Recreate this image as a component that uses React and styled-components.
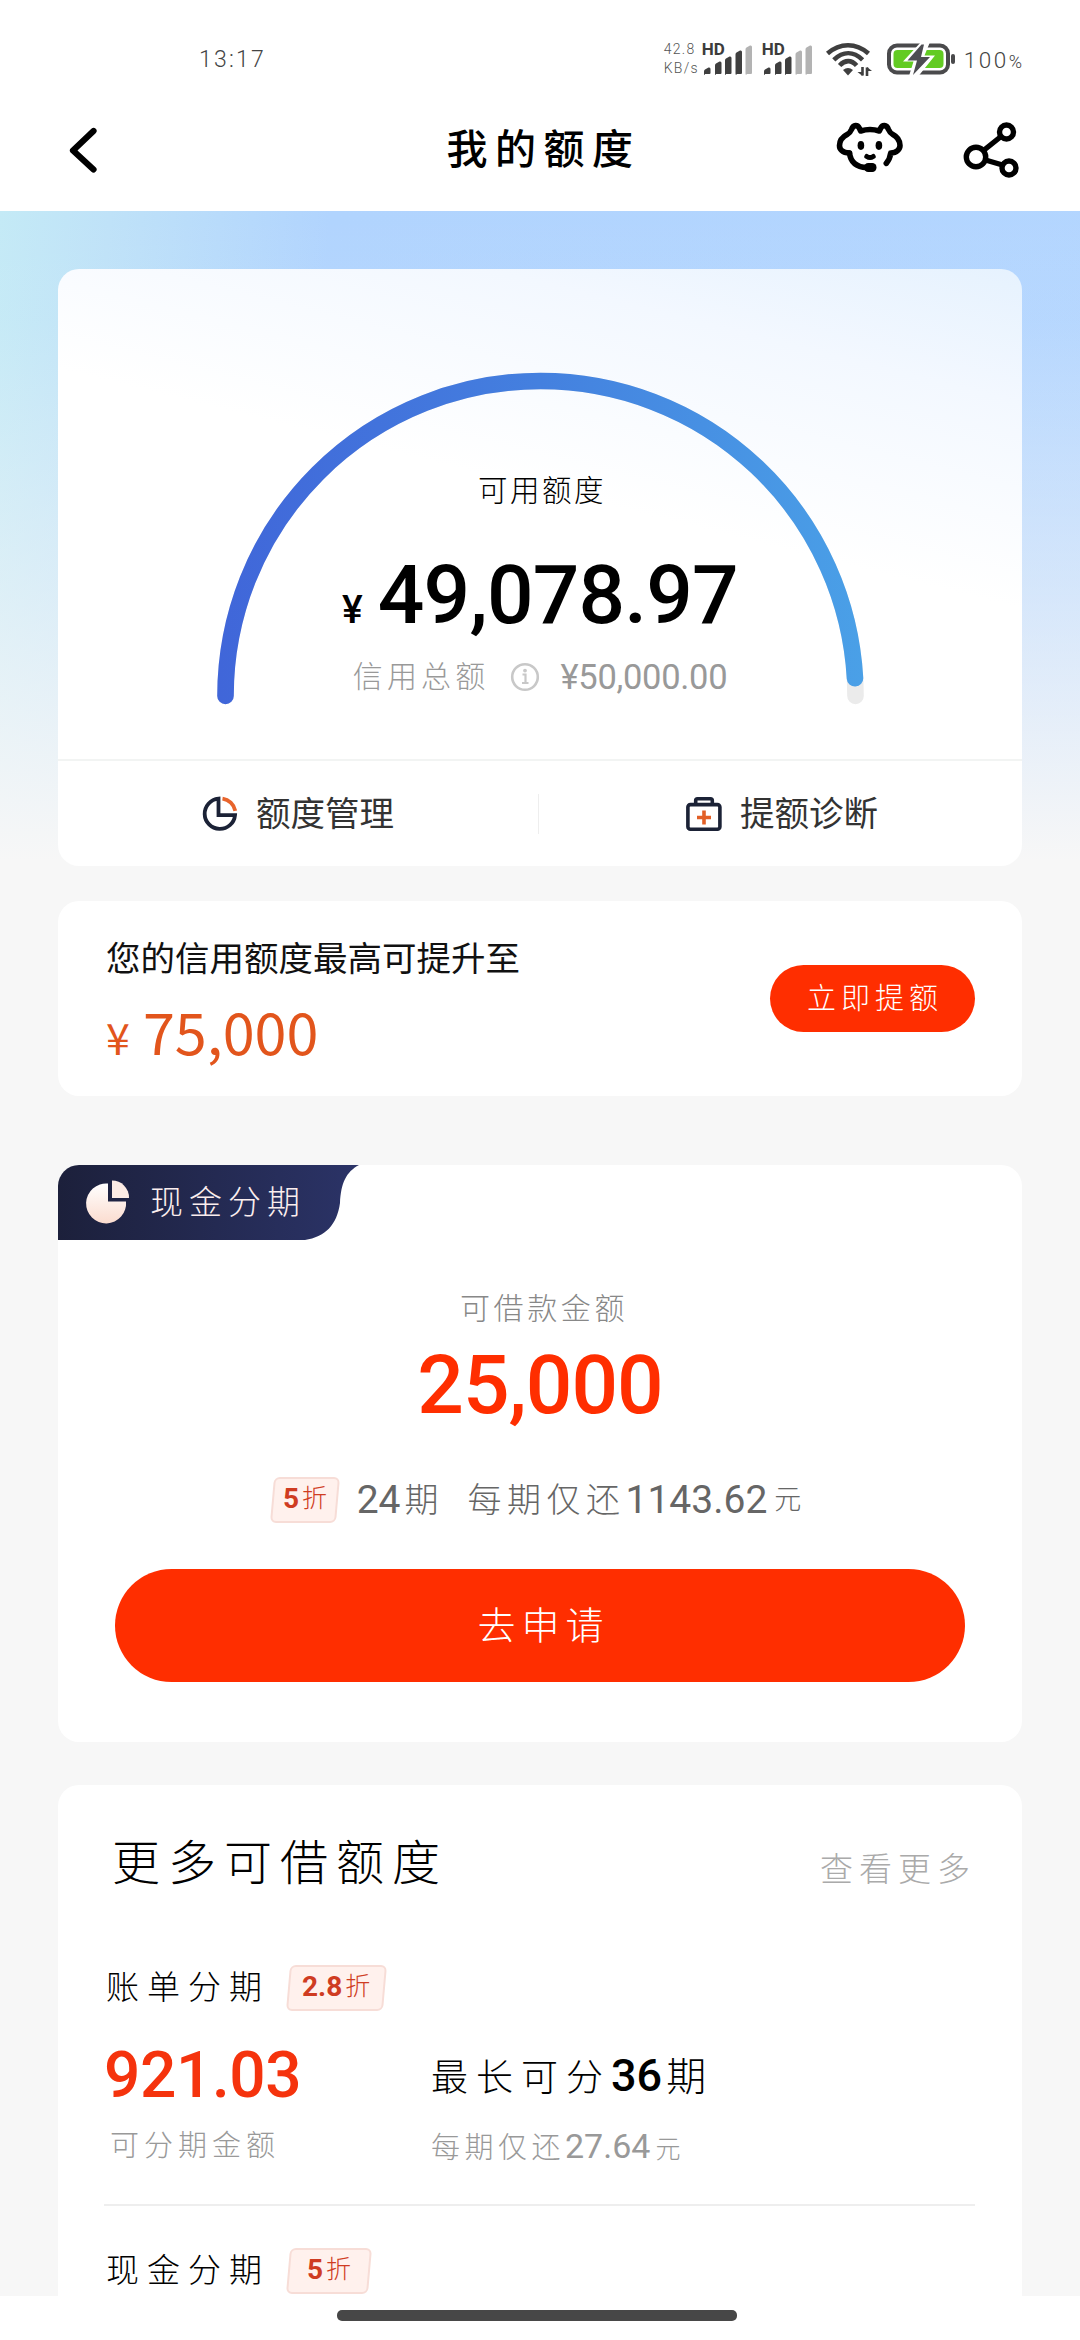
import React from "react";
import styled, { createGlobalStyle } from "styled-components";

const RED = "#ff2e00";

const GlobalStyle = createGlobalStyle`
  * { box-sizing: border-box; }
  body {
    margin: 0;
    background: #fff;
    font-family: Roboto, "Noto Sans CJK SC", sans-serif;
  }
  svg { display: block; flex: none; }
`;

const Screen = styled.div`
  width: 1080px;
  height: 2340px;
  overflow: hidden;
  display: flex;
  flex-direction: column;
  background: #fff;
`;

const Text = styled.span`
  display: block;
  white-space: nowrap;
  font-size: ${(p) => p.$size}px;
  font-weight: ${(p) => p.$weight || 300};
  line-height: ${(p) => p.$line || 40}px;
  letter-spacing: ${(p) => p.$track || 0}px;
  margin: ${(p) => p.$margin || "0"};
  color: ${(p) => p.$color || "#000"};
`;

/* ---------- status bar ---------- */

const StatusBar = styled.header`
  height: 80px;
  flex: none;
  padding: 40px 58px 0 199px;
  display: flex;
  align-items: flex-start;
  justify-content: space-between;
`;

const StatusGroup = styled.div`
  display: flex;
  align-items: flex-start;
`;

const Speed = styled.div`
  width: 38px;
  font-size: 14px;
  font-weight: 300;
  line-height: 19px;
  letter-spacing: 1.3px;
  color: #555;
  white-space: nowrap;
`;

const HdSignal = styled.div`
  width: 60px;
  display: grid;
  & > * { grid-area: 1 / 1; }
`;

const HdLabel = styled.span`
  font-size: 17px;
  font-weight: 700;
  line-height: 18px;
  color: #3c3c3c;
`;

const WifiSlot = styled.div`
  margin: 0 13px 0 3px;
`;

const Percent = styled.span`
  font-size: 18px;
  letter-spacing: 0;
`;

const BARS = [
  [2, 27, 7],
  [13, 21, 13],
  [23, 16, 18],
  [33.5, 10, 24],
  [43.5, 5, 29],
];

function Signal({ level }) {
  return (
    <HdSignal>
      <HdLabel>HD</HdLabel>
      <svg width="52" height="36" viewBox="0 0 52 36">
        {BARS.map(([x, y, h], i) => (
          <path
            key={x}
            d={`M${x + 1} ${y + h}h4.5q1 0 1-1v-${h - 3}q0-2-2-1.5l-3.5 2q-1 .5-1 2v${h - 5}q0 1.5 1 1.5z`}
            fill={i < level ? "#3f3f3f" : "#b3b3b3"}
          />
        ))}
      </svg>
    </HdSignal>
  );
}

function Wifi() {
  return (
    <svg width="48" height="36" viewBox="0 0 48 36" fill="none" stroke="#3f3f3f" strokeWidth="4.6">
      <path d="M2.5 13.5C15 2.5 31 2.5 43.500 13.500" />
      <path d="M8.800 19.800C18 11 28.500 11 37.600 19.800" />
      <path d="M14.600 25.500C20 19.700 26.500 19.700 31.600 25.500" />
      <path d="M18 30q5-4 10 0l-5 5.500z" fill="#3f3f3f" stroke="none" />
      <path d="M37.500 27v8.500M42 36v-8.500" strokeWidth="2.600" />
      <path d="M32.500 32l5 4v-4zM47 31l-5-4v4z" fill="#3f3f3f" stroke="none" />
    </svg>
  );
}

function Battery() {
  return (
    <svg width="72" height="38" viewBox="0 0 72 38">
      <rect x="3" y="5.500" width="59" height="27" rx="8" fill="#fff" stroke="#4a4a4c" strokeWidth="4" />
      <rect x="7.500" y="10" width="50" height="18" rx="4" fill="#62cb22" />
      <path d="M35 2L17 21.500h10.500L23 36h9.500L49 15.500H38.500L44 2z" fill="#fff" />
      <path d="M35.500 4.500L21.500 20.500h9.500l-4 14.500L44 17h-9l3-12.500z" fill="#4d4d52" />
      <rect x="65" y="14" width="4" height="10" rx="2" fill="#4a4a4c" />
    </svg>
  );
}

/* ---------- title bar ---------- */

const TitleBar = styled.nav`
  height: 131px;
  flex: none;
  padding: 9px 61px 0 68px;
  display: grid;
  grid-template-columns: 1fr auto 1fr;
  align-items: center;
`;

const TitleActions = styled.div`
  display: flex;
  justify-content: flex-end;
  gap: 59px;
`;

function BackIcon() {
  return (
    <svg width="30" height="48" viewBox="0 0 30 48" fill="none" stroke="#000" strokeWidth="6.200" strokeLinecap="round" strokeLinejoin="round">
      <path d="M25.500 5L5 24.500l20.500 19" />
    </svg>
  );
}

function ServiceIcon() {
  return (
    <svg width="68" height="54" viewBox="0 0 68 54" fill="none" stroke="#000" strokeWidth="5.600" strokeLinecap="round" strokeLinejoin="round">
      <path d="M13.500 32C6 32 3.500 28 3.500 24.500C3.500 19 6 16 11.500 13.200Q14 12 15.500 8.500C17.500 3.500 21.500 3.500 23.500 7.500L24.700 10Q34 7 43.300 10L44.500 7.500C46.500 3.500 50.500 3.500 52.500 8.500Q54 12 56.500 13.200C62 16 64 19 64 24.500C64 28 61 32 54.700 32Q54 38 50.300 42.300" />
      <path d="M13.500 32C14.500 41 20 46 31 46.700" />
      <rect x="28" y="42" width="12.500" height="9" rx="4.200" fill="#000" stroke="none" />
      <ellipse cx="24.900" cy="24.500" rx="3.300" ry="4.400" fill="#000" stroke="none" />
      <ellipse cx="42.900" cy="24.500" rx="3.300" ry="4.400" fill="#000" stroke="none" />
      <path d="M30.800 35.500Q34 37.600 37.200 35.500" strokeWidth="5" />
    </svg>
  );
}

function ShareIcon() {
  return (
    <svg width="56" height="58" viewBox="0 0 56 58" fill="none" stroke="#000" strokeWidth="5.400">
      <circle cx="13" cy="36" r="9.700" />
      <circle cx="43.500" cy="11" r="7" />
      <circle cx="46" cy="47" r="7" />
      <path d="M20.500 29.500L38 15.500M22.500 39l17 5" />
    </svg>
  );
}

/* ---------- page body ---------- */

const Body = styled.main`
  height: 2085px;
  flex: none;
  overflow: hidden;
  padding: 58px 58px 0;
  background:
    linear-gradient(180deg, rgba(247, 247, 247, 0) 0, rgba(247, 247, 247, 0.05) 110px, rgba(247, 247, 247, 0.5) 380px, #f7f7f7 650px),
    linear-gradient(95deg, #c4eaf6 0, #bfe2f8 110px, #b1d4fe 330px, #b4d6ff 100%) #f7f7f7;
`;

const Card = styled.section`
  height: ${(p) => p.$height}px;
  margin-bottom: ${(p) => p.$gap || 0}px;
  border-radius: 21px;
  background: #fff;
  overflow: hidden;
`;

const QuotaCard = styled(Card)`
  background: linear-gradient(194deg, #e6f2fe 0, #f3f8ff 130px, #fff 330px);
`;

const Gauge = styled.div`
  height: 490px;
  display: grid;
  & > * { grid-area: 1 / 1; }
`;

const GaugeInfo = styled.div`
  display: flex;
  flex-direction: column;
  align-items: center;
  padding-top: 202px;
`;

const AmountLine = styled.div`
  height: 90px;
  display: flex;
  align-items: baseline;
  gap: 15px;
  margin-top: 39px;
`;

const TotalLine = styled.div`
  display: flex;
  align-items: center;
  gap: 12px;
  margin-top: 17px;
`;

const Actions = styled.div`
  height: 107px;
  border-top: 2px solid #f2f4f3;
  display: flex;
  align-items: center;
`;

const Action = styled.div`
  flex: 1;
  height: 40px;
  display: flex;
  align-items: center;
  justify-content: center;
  gap: 18px;
  padding-left: ${(p) => p.$shift || 0}px;
  & + & { border-left: 1px solid #eee; }
`;

const ARC = "M167.500 427A315 315 0 0 1 797.500 427";

function GaugeArc({ ratio }) {
  const length = Math.PI * 315;
  return (
    <svg width="964" height="490" viewBox="0 0 964 490" fill="none" strokeWidth="16.600" strokeLinecap="round">
      <defs>
        <linearGradient id="arc" x1="160" y1="0" x2="805" y2="0" gradientUnits="userSpaceOnUse">
          <stop offset="0" stopColor="#4066d9" />
          <stop offset="0.500" stopColor="#4480df" />
          <stop offset="1" stopColor="#4aa0e7" />
        </linearGradient>
      </defs>
      <path d={ARC} stroke="#ebebeb" />
      <path d={ARC} stroke="url(#arc)" strokeDasharray={`${length * ratio} ${length}`} />
    </svg>
  );
}

const InfoSlot = styled.div`
  margin: 0 9px 0 8px;
`;

function InfoIcon() {
  return (
    <InfoSlot>
      <svg width="30" height="30" viewBox="0 0 30 30" fill="none" stroke="#c8c8c8">
        <circle cx="15" cy="15" r="12.800" strokeWidth="2.600" />
        <path d="M12.500 12.500h3v8M12 21h6.500" strokeWidth="2.200" />
        <circle cx="15" cy="8.600" r="1.900" fill="#c8c8c8" stroke="none" />
      </svg>
    </InfoSlot>
  );
}

function QuotaIcon() {
  return (
    <svg width="36" height="36" viewBox="0 0 36 36" fill="none" strokeWidth="3.800">
      <path d="M16.500 2.600A15.200 15.200 0 1 0 33 19.200H16.500z" stroke="#1b2236" />
      <path d="M20.500 2.600A15.500 15.500 0 0 1 33.300 14.800" stroke="#e8642c" />
    </svg>
  );
}

function KitIcon() {
  return (
    <svg width="36" height="36" viewBox="0 0 36 36" fill="none" strokeWidth="3.600">
      <rect x="1.900" y="8.600" width="32" height="24.600" rx="2.500" stroke="#1b2236" />
      <path d="M9.700 8.500V4.500q0-1.800 1.800-1.800h13q1.800 0 1.800 1.800v4" stroke="#1b2236" />
      <path d="M18 14.500v14M11 21.500h14" stroke="#e25f26" />
    </svg>
  );
}

/* ---------- raise card ---------- */

const RaiseCard = styled(Card)`
  display: flex;
  align-items: center;
  justify-content: space-between;
  padding: 0 47px 0 48px;
`;

const RaiseCopy = styled.div`
  display: flex;
  flex-direction: column;
  gap: 24px;
  padding-bottom: 2px;
`;

const RaiseTitle = styled.div`
  font: 400 34.500px/40px "Noto Sans CJK SC", sans-serif;
  color: #111;
`;

const RaiseAmount = styled.div`
  font: 400 57.500px/60px "Noto Sans CJK SC", sans-serif;
  color: #e2551c;
  small { font-size: 43px; line-height: 1; margin-right: 13px; }
`;

const PillButton = styled.button`
  border: 0;
  padding: 0;
  display: flex;
  align-items: center;
  justify-content: center;
  width: ${(p) => p.$width}px;
  height: ${(p) => p.$height}px;
  margin: ${(p) => p.$margin || "0"};
  border-radius: 60px;
  background: ${RED};
  font-family: inherit;
`;

/* ---------- cash card ---------- */

const CashCard = styled(Card)`
  display: flex;
  flex-direction: column;
  align-items: center;
`;

const CashTab = styled.div`
  align-self: flex-start;
  width: 302px;
  height: 75px;
  display: grid;
  & > * { grid-area: 1 / 1; }
`;

const CashTabLabel = styled.div`
  display: flex;
  align-items: center;
  gap: 20px;
  padding-left: 27px;
`;

function PieIcon() {
  return (
    <svg width="45" height="45" viewBox="0 0 45 45">
      <defs>
        <linearGradient id="pie" x1="0" y1="0" x2="0" y2="1">
          <stop offset="0" stopColor="#fff" />
          <stop offset="1" stopColor="#fbdccf" />
        </linearGradient>
      </defs>
      <path d="M23 3.500A20 20 0 1 0 41 21.500H23z" fill="url(#pie)" />
      <path d="M27 .5A17 17 0 0 1 44 18H27z" fill="#fdece5" />
    </svg>
  );
}

const OfferRow = styled.div`
  height: 46px;
  margin-top: 51px;
  padding-right: 7px;
  display: flex;
  align-items: center;
`;

const Badge = styled.span`
  width: ${(p) => p.$width}px;
  height: 46px;
  flex: none;
  border: 2px solid #f7ddd7;
  border-radius: 6px;
  background: #fff1ed;
  transform: skewX(-5deg);
  display: flex;
  align-items: center;
  justify-content: center;
`;

const BadgeText = styled.span`
  transform: skewX(5deg);
  display: flex;
  align-items: center;
  gap: 3px;
  font-size: 28px;
  font-weight: 700;
  line-height: 40px;
  padding-bottom: 2px;
  color: #cf3c22;
  small { font-size: 25px; font-weight: 300; }
`;

function Discount({ value, width }) {
  return (
    <Badge $width={width}>
      <BadgeText>
        {value}
        <small>折</small>
      </BadgeText>
    </Badge>
  );
}

/* ---------- more quotas ---------- */

const MoreCard = styled(Card)`
  padding: 49px 47px 0 46px;
`;

const MoreHead = styled.div`
  height: 60px;
  margin-bottom: 71px;
  padding-left: 8px;
  display: flex;
  justify-content: space-between;
`;

const PlanHead = styled.div`
  height: 46px;
  padding-left: 2px;
  display: flex;
  align-items: center;
  gap: 18px;
`;

const PlanGrid = styled.div`
  display: grid;
  grid-template-columns: 327px 1fr;
  grid-template-rows: 60px 36px;
  row-gap: 22px;
  margin-top: 35px;
  padding-bottom: 40px;
  margin-bottom: 42px;
  border-bottom: 2px solid #eee;
`;

const Mixed = styled.div`
  display: flex;
  align-items: baseline;
`;

const HomeArea = styled.footer`
  height: 44px;
  display: flex;
  justify-content: center;
  padding: 14px 7px 0 0;
`;

const HomeBar = styled.div`
  width: 400px;
  height: 11px;
  border-radius: 5px;
  background: #474747;
`;

export default function App() {
  return (
    <Screen>
      <GlobalStyle />
      <StatusBar>
        <Text $size={23} $weight={300} $track={2.2} $color="#444">13:17</Text>
        <StatusGroup>
          <Speed>42.8<br />KB/s</Speed>
          <Signal level={4} />
          <Signal level={3} />
          <WifiSlot><Wifi /></WifiSlot>
          <Battery />
          <Text $size={22.5} $track={2.5} $color="#444" $margin="0 0 0 6px">
            100<Percent>%</Percent>
          </Text>
        </StatusGroup>
      </StatusBar>

      <TitleBar>
        <BackIcon />
        <Text $size={41} $weight={500} $track={7.5} $line={60}>我的额度</Text>
        <TitleActions>
          <ServiceIcon />
          <ShareIcon />
        </TitleActions>
      </TitleBar>

      <Body>
        <QuotaCard $height={597} $gap={35}>
          <Gauge>
            <GaugeArc ratio={0.9816} />
            <GaugeInfo>
              <Text $size={29.5} $track={2.5} $margin="0 0 0 4px">可用额度</Text>
              <AmountLine>
                <Text $size={39} $weight={500} $line={90}>¥</Text>
                <Text $size={82} $weight={500} $line={90} $track={-0.8}>49,078.97</Text>
              </AmountLine>
              <TotalLine>
                <Text $size={30} $track={4.2} $color="#999">信用总额</Text>
                <InfoIcon />
                <Text $size={34.5} $weight={400} $track={-0.3} $color="#999">¥50,000.00</Text>
              </TotalLine>
            </GaugeInfo>
          </Gauge>
          <Actions>
            <Action>
              <QuotaIcon />
              <Text $size={34.5} $weight={400} $color="#333">额度管理</Text>
            </Action>
            <Action $shift={3}>
              <KitIcon />
              <Text $size={34.5} $weight={400} $color="#333">提额诊断</Text>
            </Action>
          </Actions>
        </QuotaCard>

        <RaiseCard $height={195} $gap={69}>
          <RaiseCopy>
            <RaiseTitle>您的信用额度最高可提升至</RaiseTitle>
            <RaiseAmount><small>¥</small>75,000</RaiseAmount>
          </RaiseCopy>
          <PillButton $width={205} $height={67}>
            <Text $size={29} $track={5} $color="#fff" $margin="0 0 0 5px">立即提额</Text>
          </PillButton>
        </RaiseCard>

        <CashCard $height={577} $gap={43}>
          <CashTab>
            <svg width="302" height="75" viewBox="0 0 302 75">
              <defs>
                <linearGradient id="tab">
                  <stop offset="0" stopColor="#1c203b" />
                  <stop offset="1" stopColor="#2b3367" />
                </linearGradient>
              </defs>
              <path d="M0 0H301C288 7 283 18 282 38C279 60 267 72 247 75H0z" fill="url(#tab)" />
            </svg>
            <CashTabLabel>
              <PieIcon />
              <Text $size={33} $track={6} $color="#fbeeee">现金分期</Text>
            </CashTabLabel>
          </CashTab>
          <Text $size={30} $track={3.6} $color="#888" $margin="49px 0 0 8px">可借款金额</Text>
          <Text $size={82} $weight={500} $line={82} $track={-1} $color={RED} $margin="15px 0 0">25,000</Text>
          <OfferRow>
            <Discount value="5" width={66} />
            <Text $size={39} $weight={400} $color="#666" $margin="0 4px 0 19px">24</Text>
            <Text $size={34} $color="#666" $margin="0 29px 0 0">期</Text>
            <Text $size={34} $track={5.5} $color="#666">每期仅还</Text>
            <Text $size={39} $weight={400} $color="#666">1143.62</Text>
            <Text $size={27} $color="#666" $margin="0 0 0 7px">元</Text>
          </OfferRow>
          <PillButton $width={850} $height={113} $margin="46px 0 0">
            <Text $size={38} $track={6} $line={60} $color="#fff" $margin="0 0 0 7px">去申请</Text>
          </PillButton>
        </CashCard>

        <MoreCard $height={600}>
          <MoreHead>
            <Text $size={48} $track={8} $line={60}>更多可借额度</Text>
            <Text $size={33} $track={6} $line={72} $color="#aaa" $margin="0 -1px 0 0">查看更多</Text>
          </MoreHead>
          <PlanHead>
            <Text $size={33} $track={8}>账单分期</Text>
            <Discount value="2.8" width={97} />
          </PlanHead>
          <PlanGrid>
            <Text $size={64} $weight={500} $line={60} $track={-0.4} $color="#f5330d">921.03</Text>
            <Mixed>
              <Text $size={37} $track={8} $line={60}>最长可分</Text>
              <Text $size={45} $weight={500} $line={60}>36</Text>
              <Text $size={40} $line={60} $margin="0 0 0 4px">期</Text>
            </Mixed>
            <Text $size={29} $track={5} $line={36} $color="#999" $margin="0 0 0 6px">可分期金额</Text>
            <Mixed>
              <Text $size={29} $track={4.5} $line={36} $color="#999">每期仅还</Text>
              <Text $size={34} $weight={400} $line={36} $color="#999">27.64</Text>
              <Text $size={25} $line={36} $color="#999" $margin="0 0 0 5px">元</Text>
            </Mixed>
          </PlanGrid>
          <PlanHead>
            <Text $size={33} $track={8}>现金分期</Text>
            <Discount value="5" width={82} />
          </PlanHead>
        </MoreCard>
      </Body>

      <HomeArea>
        <HomeBar />
      </HomeArea>
    </Screen>
  );
}
